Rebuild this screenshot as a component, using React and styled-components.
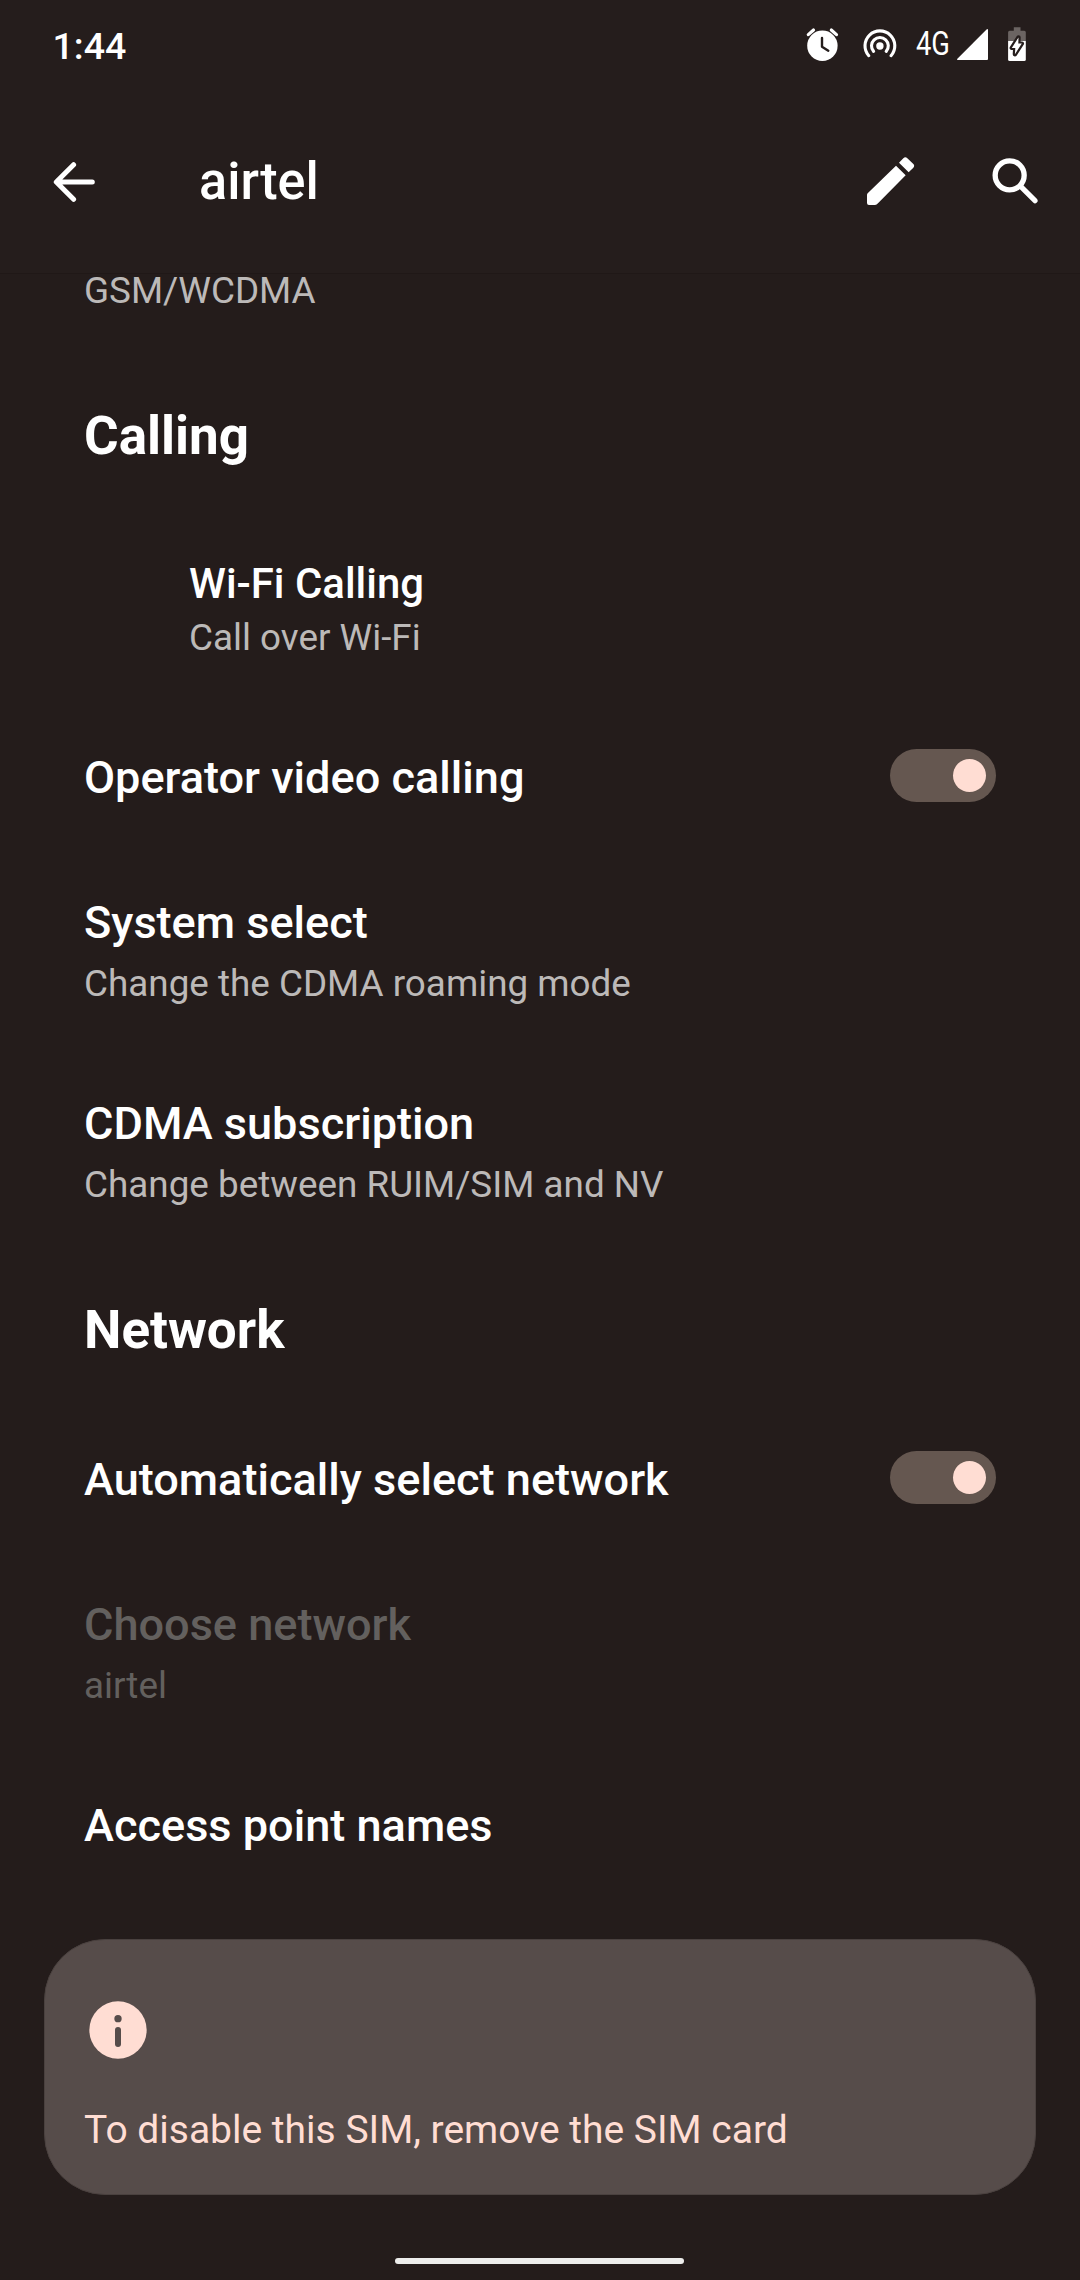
import React, { useState } from "react";
import styled, { createGlobalStyle } from "styled-components";

const color = {
  bg: "#241c1b",
  bar: "#251d1c",
  barEdge: "#201817",
  text: "#ffffff",
  muted: "#bcb9b8",
  disabled: "#63605e",
  accent: "#ffddd3",
  track: "#655750",
  card: "#564c4a",
  cardEdge: "#4a413f",
};

const GlobalStyle = createGlobalStyle`
  * { box-sizing: border-box; }
  body {
    margin: 0;
    background: ${color.bg};
    color: ${color.text};
    font-family: Roboto, "Noto Sans", sans-serif;
  }
`;

const Screen = styled.div`
  width: 1080px;
  height: 2280px;
  display: flex;
  flex-direction: column;
  overflow: hidden;
  background: ${color.bg};
`;

const StatusBar = styled.header`
  height: 92px;
  padding: 0 54px 0 52.5px;
  display: flex;
  align-items: center;
  justify-content: space-between;
  background: ${color.bar};
`;

const Clock = styled.span`
  font-size: 37.5px;
  font-weight: 500;
  line-height: 44px;
`;

const StatusIcons = styled.div`
  height: 92px;
  display: flex;
  align-items: flex-start;
  padding-top: 27px;
`;

const StatusIcon = styled.svg`
  display: block;
  flex: none;
  width: ${(p) => p.$w}px;
  height: 36px;
  margin-left: ${(p) => p.$gap || 0}px;
`;

const NetworkType = styled.span`
  width: 34px;
  margin-left: 18px;
  font-size: 32.5px;
  line-height: 34px;
  white-space: nowrap;
  transform: scaleX(0.84);
  transform-origin: left center;
`;

const AppBar = styled.div`
  height: 182px;
  padding: 0 42px 2px 53px;
  display: flex;
  align-items: center;
  background: ${color.bar};
  border-bottom: 1px solid ${color.barEdge};
`;

const IconButton = styled.button`
  display: flex;
  padding: 0;
  border: 0;
  background: none;
  color: inherit;
  margin-left: ${(p) => p.$gap || 0}px;
`;

const Title = styled.h1`
  flex: 1;
  margin: 0 0 0 104px;
  font-size: 52.2px;
  font-weight: 500;
  line-height: 60px;
`;

const List = styled.main`
  flex: 1;
  display: flex;
  flex-direction: column;
`;

const ClippedSummary = styled.p`
  height: 84px;
  margin: 0;
  padding-left: 84px;
  font-size: 36.85px;
  line-height: 34px;
  color: ${color.muted};
`;

const SectionHeading = styled.h2`
  height: 155px;
  margin: 0;
  padding-left: 84px;
  display: flex;
  align-items: center;
  font-size: 53px;
  font-weight: 700;
`;

const Preference = styled.section`
  height: ${(p) => (p.$compact ? 192 : 201)}px;
  padding: 46px 84px 0 ${(p) => (p.$compact ? 189 : 84)}px;
  color: ${(p) => (p.$disabled ? color.disabled : color.text)};
`;

const SingleLine = styled.section`
  height: 145px;
  padding: 0 84px;
  display: flex;
  align-items: center;
  justify-content: space-between;
`;

const Label = styled.div`
  font-size: ${(p) => (p.$compact ? 41.9 : 45.1)}px;
  font-weight: 500;
  line-height: ${(p) => (p.$compact ? 50 : 54)}px;
`;

const Summary = styled.div`
  font-size: 36.85px;
  line-height: ${(p) => (p.$compact ? 58 : 68)}px;
  color: ${(p) => (p.$disabled ? color.disabled : color.muted)};
`;

const Track = styled.button`
  width: 106px;
  height: 53px;
  margin-bottom: 4px;
  padding: 0 10px;
  border: 0;
  border-radius: 27px;
  display: flex;
  align-items: center;
  justify-content: ${(p) => (p.$on ? "flex-end" : "flex-start")};
  background: ${color.track};
`;

const Thumb = styled.span`
  width: 33px;
  height: 33px;
  border-radius: 50%;
  background: ${color.accent};
`;

const InfoCard = styled.aside`
  height: 256px;
  margin: 41px 44px 0;
  padding: 61px 39px 0;
  border: 1px solid ${color.cardEdge};
  border-radius: 61px;
  background: ${color.card};
  color: ${color.accent};
`;

const InfoIcon = styled.svg`
  display: block;
  width: 58px;
  height: 58px;
  margin-left: 5px;
`;

const InfoText = styled.p`
  margin: 46px 0 0;
  font-size: 39px;
  line-height: 50px;
  white-space: nowrap;
`;

const NavArea = styled.footer`
  height: 22px;
  padding-right: 1px;
  display: flex;
  justify-content: center;
`;

const NavHandle = styled.div`
  width: 289px;
  height: 6px;
  border-radius: 3px;
  background: #ededec;
`;

function Toggle({ label }) {
  const [on, setOn] = useState(true);
  return (
    <Track $on={on} role="switch" aria-checked={on} aria-label={label} onClick={() => setOn(!on)}>
      <Thumb />
    </Track>
  );
}

function ToggleRow({ label }) {
  return (
    <SingleLine>
      <Label>{label}</Label>
      <Toggle label={label} />
    </SingleLine>
  );
}

function PreferenceRow({ label, summary, compact, disabled }) {
  return (
    <Preference $compact={compact} $disabled={disabled}>
      <Label $compact={compact}>{label}</Label>
      <Summary $compact={compact} $disabled={disabled}>{summary}</Summary>
    </Preference>
  );
}

function AlarmIcon() {
  return (
    <StatusIcon $w={34} viewBox="806 27 34 36" fill="none" strokeLinecap="round">
      <circle cx="822.4" cy="45.7" r="15.2" fill="#fff" />
      <path d="M808.3 34.6l5.2-4.6M836.5 34.6l-5.2-4.6" stroke="#fff" strokeWidth="3.2" />
      <path d="M822 38v8.7l6.3 4" stroke={color.bar} strokeWidth="2.4" strokeLinejoin="round" />
    </StatusIcon>
  );
}

function HotspotIcon() {
  return (
    <StatusIcon $w={36} $gap={22.5} viewBox="862.5 27 36 36" fill="none" stroke="#fff" strokeWidth="3.1" strokeLinecap="round">
      <circle cx="880.4" cy="46" r="3.7" fill="#fff" stroke="none" />
      <path d="M869.3 55.7a14.9 14.9 0 1 1 22.2 0" />
      <path d="M874.1 51.4a8.4 8.4 0 1 1 12.6 0" />
    </StatusIcon>
  );
}

function SignalIcon() {
  return (
    <StatusIcon $w={31} $gap={6.5} viewBox="957 27 31 36">
      <path d="M988 29.6V59q0 1-1 1h-29.4q-1-.3-.2-1.2L986.8 29.3q1-.6 1.2.3z" fill="#fff" />
    </StatusIcon>
  );
}

function BatteryIcon() {
  return (
    <StatusIcon $w={18} $gap={20.5} viewBox="1008.2 27 18 36">
      <path d="M1014 27.3h6.7v3.4h3.8q1.5 0 1.5 1.5V41h-17.7v-8.8q0-1.500 1.500-1.500h4.200z" fill="#6b6462" />
      <path d="M1008.300 41H1026v18.500q0 1.500-1.500 1.500h-14.700q-1.500 0-1.500-1.500z" fill="#fff" />
      <path
        d="M1018.700 37.400L1012 47.900h3.500L1015.100 54.200l6.900-10.600h-3.500z"
        fill="#fff"
        stroke={color.bar}
        strokeWidth="4.400"
        strokeLinejoin="round"
        paintOrder="stroke"
      />
    </StatusIcon>
  );
}

function BackIcon() {
  return (
    <svg width="42" height="42" viewBox="53 160.500 42 42" fill="none" stroke="#fff" strokeWidth="5" strokeLinecap="round" strokeLinejoin="round">
      <path d="M92.300 181.500H57M73.600 164.200L56.300 181.500l17.300 17.300" />
    </svg>
  );
}

function EditIcon() {
  return (
    <svg width="48" height="49" viewBox="141 110 144 147" fill="#fff">
      <path d="M141 224q0-3 2-5L228 136l29 29-83 84q-4 5-9 5h-18q-6 0-6-6z" />
      <path d="M237 127l13-13q6-6 12 0l18 17q5 5 0 11l-14 14z" />
    </svg>
  );
}

function SearchIcon() {
  return (
    <svg width="46" height="49" viewBox="517 107 138 147" fill="none" stroke="#fff" strokeLinecap="round">
      <circle cx="570" cy="162" r="43.500" strokeWidth="16" />
      <path d="M603 195l43 43" strokeWidth="15.500" />
    </svg>
  );
}

export default function App() {
  return (
    <Screen>
      <GlobalStyle />
      <StatusBar>
        <Clock>1:44</Clock>
        <StatusIcons>
          <AlarmIcon />
          <HotspotIcon />
          <NetworkType>4G</NetworkType>
          <SignalIcon />
          <BatteryIcon />
        </StatusIcons>
      </StatusBar>
      <AppBar>
        <IconButton aria-label="Back"><BackIcon /></IconButton>
        <Title>airtel</Title>
        <IconButton aria-label="Edit"><EditIcon /></IconButton>
        <IconButton aria-label="Search" $gap={77}><SearchIcon /></IconButton>
      </AppBar>
      <List>
        <ClippedSummary>GSM/WCDMA</ClippedSummary>
        <SectionHeading>Calling</SectionHeading>
        <PreferenceRow compact label="Wi-Fi Calling" summary="Call over Wi-Fi" />
        <ToggleRow label="Operator video calling" />
        <PreferenceRow label="System select" summary="Change the CDMA roaming mode" />
        <PreferenceRow label="CDMA subscription" summary="Change between RUIM/SIM and NV" />
        <SectionHeading>Network</SectionHeading>
        <ToggleRow label="Automatically select network" />
        <PreferenceRow disabled label="Choose network" summary="airtel" />
        <SingleLine>
          <Label>Access point names</Label>
        </SingleLine>
        <InfoCard>
          <InfoIcon viewBox="177 243 174 174">
            <circle cx="264" cy="330" r="86" fill="currentColor" />
            <circle cx="264" cy="296" r="11" fill={color.card} />
            <rect x="255" y="321" width="18" height="60" rx="9" fill={color.card} />
          </InfoIcon>
          <InfoText>To disable this SIM, remove the SIM card</InfoText>
        </InfoCard>
      </List>
      <NavArea>
        <NavHandle />
      </NavArea>
    </Screen>
  );
}
